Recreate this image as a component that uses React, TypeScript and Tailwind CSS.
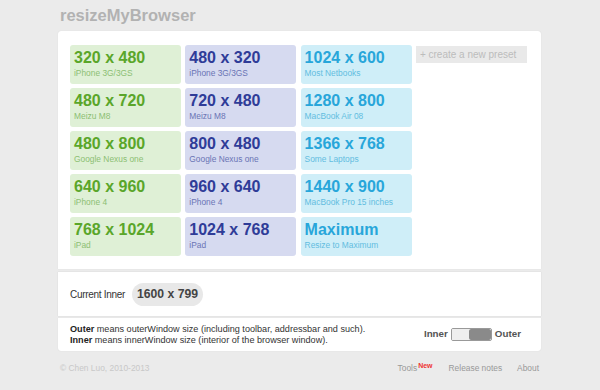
import React from "react";

type Preset = { size: string; label: string; tone: "green" | "blue" | "cyan" };

const PRESETS: Preset[] = [
  { size: "320 x 480", label: "iPhone 3G/3GS", tone: "green" },
  { size: "480 x 320", label: "iPhone 3G/3GS", tone: "blue" },
  { size: "1024 x 600", label: "Most Netbooks", tone: "cyan" },
  { size: "480 x 720", label: "Meizu M8", tone: "green" },
  { size: "720 x 480", label: "Meizu M8", tone: "blue" },
  { size: "1280 x 800", label: "MacBook Air 08", tone: "cyan" },
  { size: "480 x 800", label: "Google Nexus one", tone: "green" },
  { size: "800 x 480", label: "Google Nexus one", tone: "blue" },
  { size: "1366 x 768", label: "Some Laptops", tone: "cyan" },
  { size: "640 x 960", label: "iPhone 4", tone: "green" },
  { size: "960 x 640", label: "iPhone 4", tone: "blue" },
  { size: "1440 x 900", label: "MacBook Pro 15 inches", tone: "cyan" },
  { size: "768 x 1024", label: "iPad", tone: "green" },
  { size: "1024 x 768", label: "iPad", tone: "blue" },
  { size: "Maximum", label: "Resize to Maximum", tone: "cyan" },
];

const TONES = {
  green: { box: "bg-[#dff0d6]", big: "text-[#5aa62a]", small: "text-[#8cbf73]" },
  blue: { box: "bg-[#d6daf0]", big: "text-[#2f3c98]", small: "text-[#6a74b5]" },
  cyan: { box: "bg-[#cfeef8]", big: "text-[#28a6da]", small: "text-[#62bde0]" },
};

function Tile({ p }: { p: Preset }) {
  const t = TONES[p.tone];
  return (
    <div className={`h-[39px] rounded-[3px] pl-[4px] pt-[4px] ${t.box}`}>
      <div className={`text-[16px] font-bold leading-[18px] ${t.big}`}>{p.size}</div>
      <div className={`mt-[1px] text-[8.4px] leading-[10px] ${t.small}`}>{p.label}</div>
    </div>
  );
}

export default function App() {
  const rows = [0, 1, 2, 3, 4];
  return (
    <div className="min-h-[390px] w-[600px] bg-[#ebebeb] font-['Liberation_Sans',Arial,sans-serif]">
      <div className="ml-[58px] w-[483px]">
        <div className="h-[31px] pl-[2px] pt-[5px] text-[16.5px] font-bold leading-[20px] text-[#b2b2b2]">
          resizeMyBrowser
        </div>

        {/* presets */}
        <div className="rounded-t-[3px] bg-white pl-[12px] pt-[14px] pb-[13px] shadow-[0_0_1px_rgba(0,0,0,0.15)]">
          <div className="grid grid-cols-[111px_111px_111px_111px] gap-x-[4.3px] gap-y-[4px]">
            {rows.map((r) => (
              <React.Fragment key={r}>
                {PRESETS.slice(r * 3, r * 3 + 3).map((p) => (
                  <Tile key={p.size} p={p} />
                ))}
                {r === 0 ? (
                  <div className="mt-[1px] h-[17px] self-start bg-[#e9e9e9] pl-[4px] text-[10px] leading-[17px] text-[#bcbcbc]">
                    + create a new preset
                  </div>
                ) : (
                  <div />
                )}
              </React.Fragment>
            ))}
          </div>
        </div>

        {/* current size */}
        <div className="mt-[3px] flex h-[44px] items-center bg-white pl-[12px] shadow-[0_0_1px_rgba(0,0,0,0.15)]">
          <span className="text-[10px] tracking-[-0.3px] text-[#333]">Current Inner</span>
          <span className="ml-[7px] flex h-[23px] items-center rounded-full bg-[#e8e8e8] px-[5px] text-[12.2px] font-bold text-[#444]">
            1600 x 799
          </span>
        </div>

        {/* legend */}
        <div className="mt-[2px] flex h-[33px] items-center justify-between rounded-b-[3px] bg-white pl-[12px] pr-[20px] shadow-[0_0_1px_rgba(0,0,0,0.15)]">
          <div className="text-[9.1px] leading-[11px] text-[#333]">
            <div>
              <b className="text-[#222]">Outer</b> means outerWindow size (including toolbar, addressbar and such).
            </div>
            <div>
              <b className="text-[#222]">Inner</b> means innerWindow size (interior of the browser window).
            </div>
          </div>
          <div className="flex items-center gap-[3px] text-[9.8px] font-bold text-[#555]">
            <span>Inner</span>
            <div className="flex h-[13px] w-[41px] overflow-hidden rounded-[2px] border border-[#999]">
              <div className="w-[17px] bg-[#eeeeee]" />
              <div className="flex-1 rounded-[2px] bg-[#8a8a8a]" />
            </div>
            <span>Outer</span>
          </div>
        </div>

        {/* footer */}
        <div className="mt-[11px] flex items-center justify-between pl-[2px] pr-[2px] text-[8.4px] leading-[12px]">
          <span className="text-[#c8c8c8]">© Chen Luo, 2010-2013</span>
          <div className="flex items-center text-[#999]">
            <span>
              Tools
              <sup className="relative -top-[3px] ml-[1px] text-[7px] font-bold text-[#e33]">New</sup>
            </span>
            <span className="ml-[16px]">Release notes</span>
            <span className="ml-[15px]">About</span>
          </div>
        </div>
      </div>
    </div>
  );
}
